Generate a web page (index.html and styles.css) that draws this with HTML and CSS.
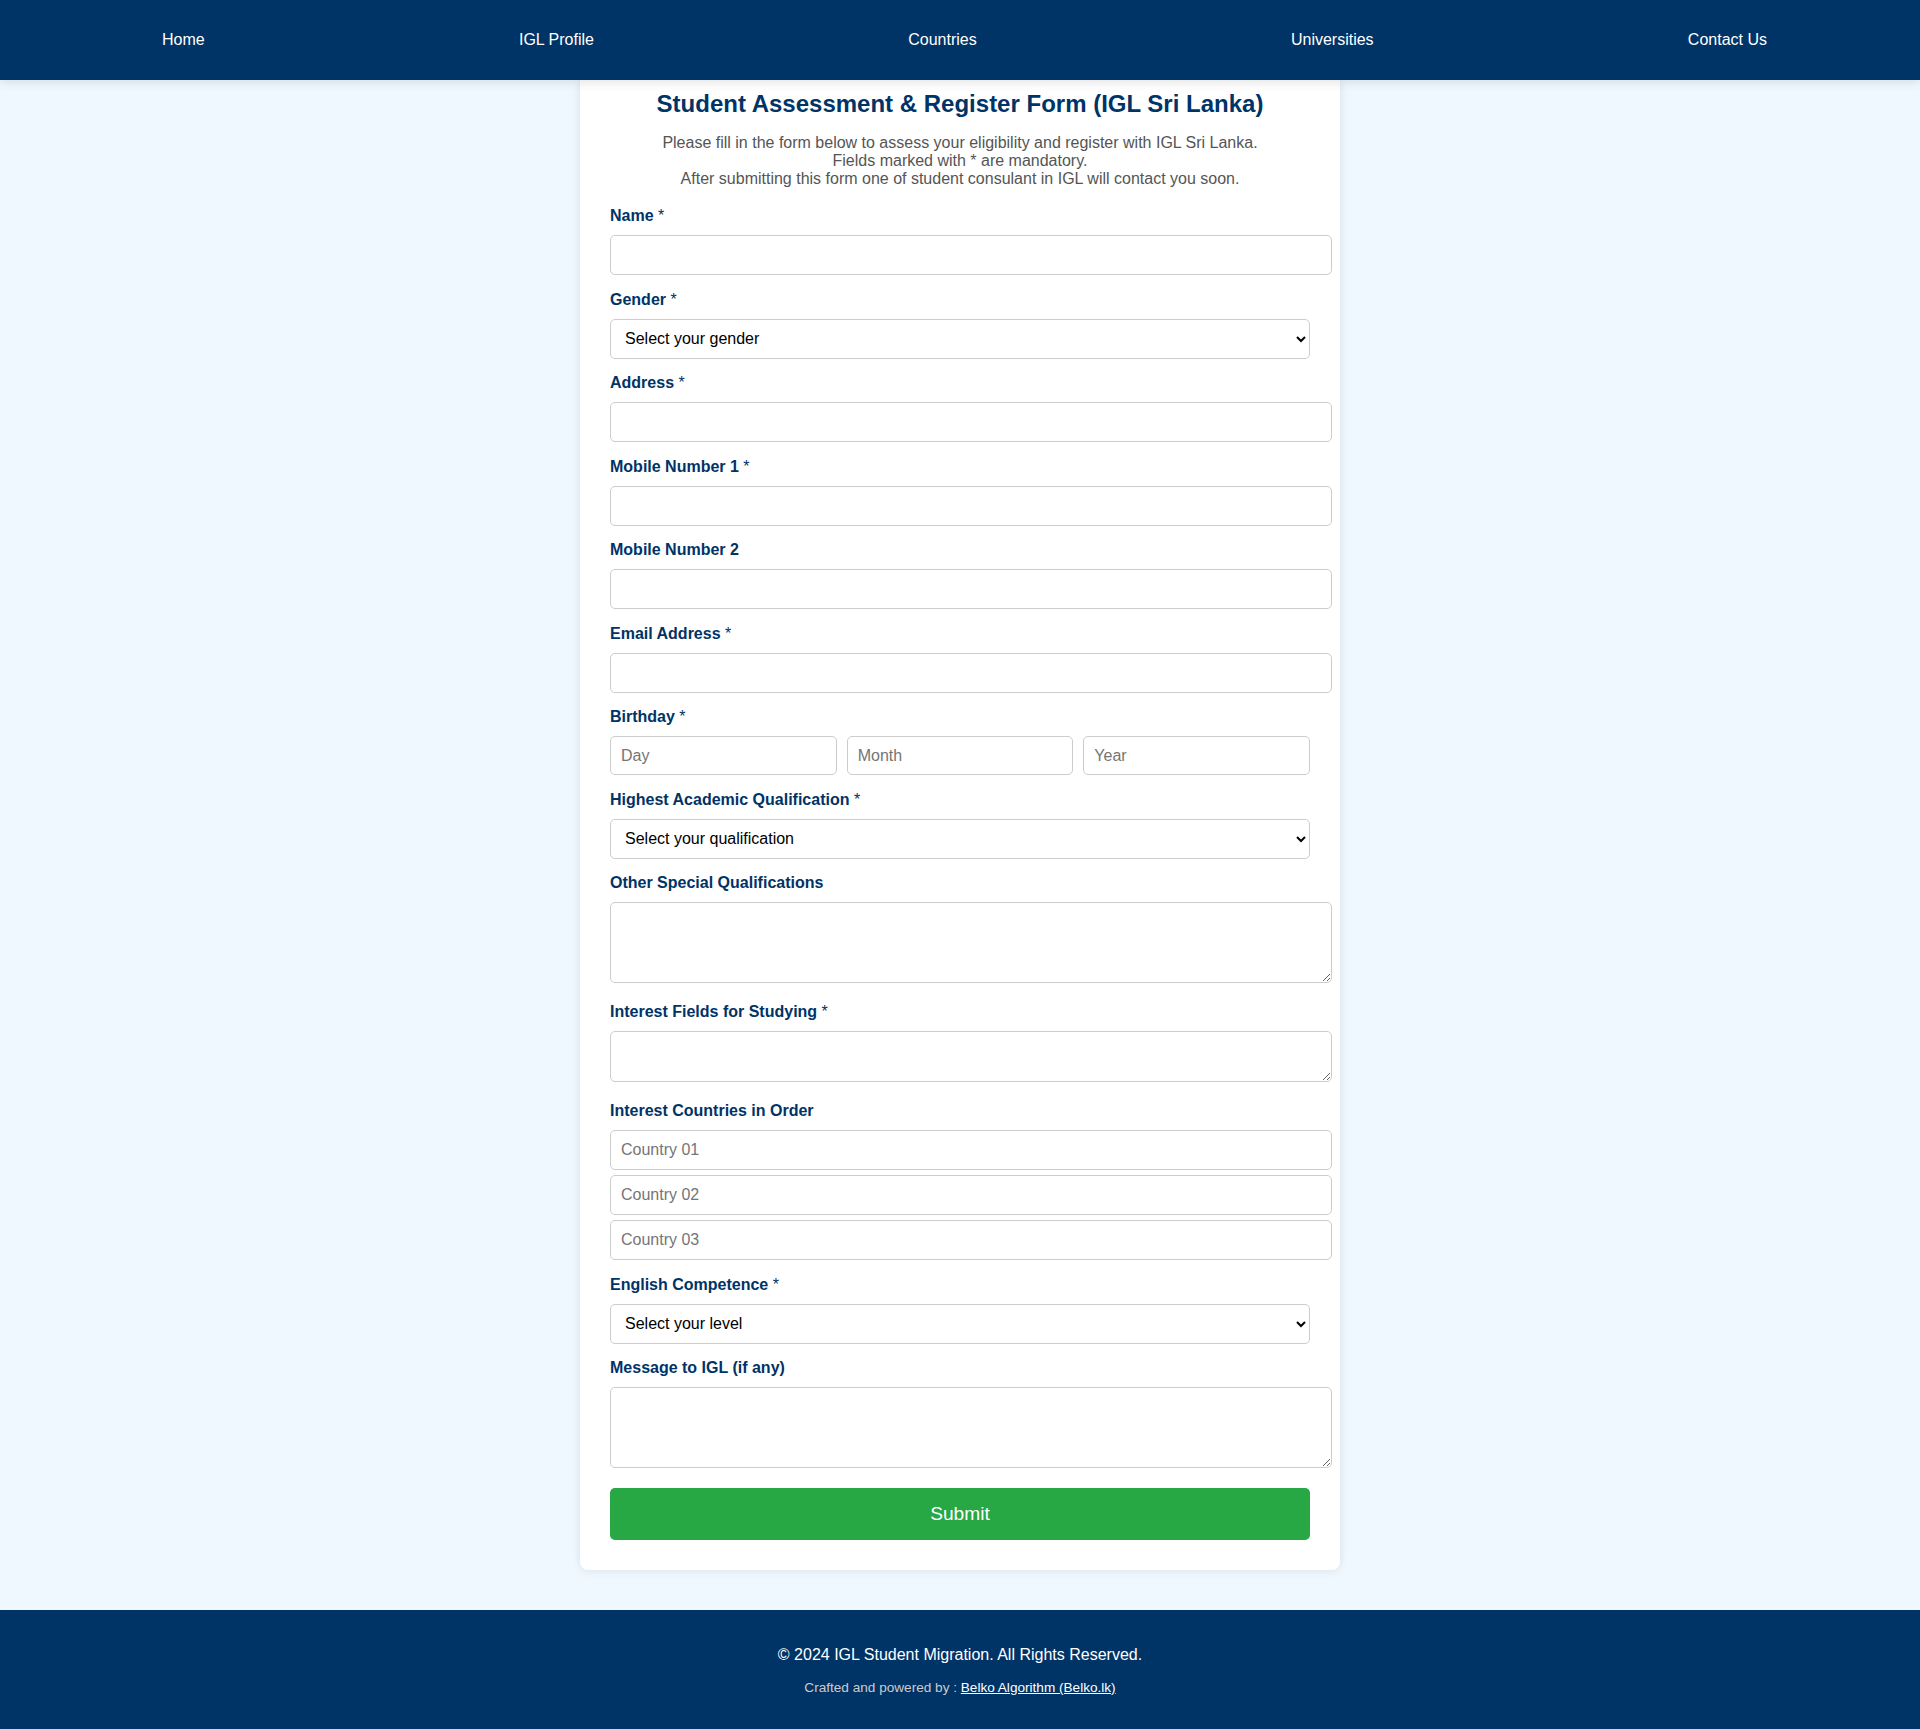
FILE: index.html
```html
<!DOCTYPE html>
<html lang="en">
<head>
<meta charset="utf-8">
<title>Student Assessment &amp; Register Form</title>
<link rel="stylesheet" href="styles.css">
</head>
<body>
<nav class="topnav">
  <a href="#">Home</a>
  <a href="#">IGL Profile</a>
  <a href="#">Countries</a>
  <a href="#">Universities</a>
  <a href="#">Contact Us</a>
</nav>

<main class="card">
  <h2 class="title">Student Assessment &amp; Register Form (IGL Sri Lanka)</h2>
  <p class="intro">Please fill in the form below to assess your eligibility and register with IGL Sri Lanka.<br>Fields marked with * are mandatory.<br>After submitting this form one of student consulant in IGL will contact you soon.</p>

  <form class="form">
    <div class="group">
      <label>Name <span class="req">*</span></label>
      <input type="text" class="field">
    </div>
    <div class="group">
      <label>Gender <span class="req">*</span></label>
      <select class="select">
        <option>Select your gender</option>
        <option>Male</option>
        <option>Female</option>
      </select>
    </div>
    <div class="group">
      <label>Address <span class="req">*</span></label>
      <input type="text" class="field">
    </div>
    <div class="group">
      <label>Mobile Number 1 <span class="req">*</span></label>
      <input type="text" class="field">
    </div>
    <div class="group">
      <label>Mobile Number 2</label>
      <input type="text" class="field">
    </div>
    <div class="group">
      <label>Email Address <span class="req">*</span></label>
      <input type="text" class="field">
    </div>
    <div class="group">
      <label>Birthday <span class="req">*</span></label>
      <div class="birth-row">
        <input type="text" class="birth" placeholder="Day">
        <input type="text" class="birth" placeholder="Month">
        <input type="text" class="birth" placeholder="Year">
      </div>
    </div>
    <div class="group">
      <label>Highest Academic Qualification <span class="req">*</span></label>
      <select class="select">
        <option>Select your qualification</option>
      </select>
    </div>
    <div class="group group-ta">
      <label>Other Special Qualifications</label>
      <textarea class="area area-lg"></textarea>
    </div>
    <div class="group group-ta">
      <label>Interest Fields for Studying <span class="req">*</span></label>
      <textarea class="area area-sm"></textarea>
    </div>
    <div class="group">
      <label>Interest Countries in Order</label>
      <div class="country-list">
        <input type="text" class="field" placeholder="Country 01">
        <input type="text" class="field" placeholder="Country 02">
        <input type="text" class="field" placeholder="Country 03">
      </div>
    </div>
    <div class="group">
      <label>English Competence <span class="req">*</span></label>
      <select class="select">
        <option>Select your level</option>
      </select>
    </div>
    <div class="group group-ta">
      <label>Message to IGL (if any)</label>
      <textarea class="area area-lg"></textarea>
    </div>
    <button type="button" class="submit">Submit</button>
  </form>
</main>

<footer class="footer">
  <p class="copy">&copy; 2024 IGL Student Migration. All Rights Reserved.</p>
  <p class="credit">Crafted and powered by : <a href="#">Belko Algorithm (Belko.lk)</a></p>
</footer>
</body>
</html>
```

FILE: styles.css
```css
* {
  font-family: "Liberation Sans", Arial, sans-serif;
}

body {
  margin: 0;
  background: #f0f8ff;
  color: #333;
}

.topnav {
  position: relative;
  z-index: 10;
  height: 80px;
  padding: 0 153px 0 162px;
  background: #003366;
  display: flex;
  align-items: center;
  justify-content: space-between;
  box-shadow: 0 2px 10px rgba(0, 0, 0, 0.12);
}

.topnav a {
  color: #fff;
  text-decoration: none;
  font-size: 16px;
}

.card {
  display: block;
  width: 700px;
  margin: 0 auto 40px;
  padding: 10px 30px 30px;
  background: #fff;
  border-radius: 0 0 8px 8px;
  box-shadow: 0 0 10px rgba(0, 0, 0, 0.1);
}

.title {
  margin: 0 0 16px;
  text-align: center;
  color: #003366;
  font-size: 24px;
  font-weight: bold;
}

.intro {
  margin: 0 0 19px;
  text-align: center;
  color: #555;
  font-size: 16px;
}

.form {
  margin: 0;
}

.group {
  margin-bottom: 15.5px;
}

.group-ta {
  margin-bottom: 20px;
}

.group label {
  display: block;
  margin-bottom: 10px;
  color: #003366;
  font-size: 16px;
  font-weight: bold;
}

.req {
  font-weight: normal;
}

.field,
.area {
  display: block;
  width: 100%;
  box-sizing: content-box;
  padding: 10px;
  border: 1px solid #ccc;
  border-radius: 5px;
  font-size: 16px;
  background: #fff;
  margin: 0;
}

.field {
  height: 18px;
}

.area {
  resize: vertical;
}

.area-lg {
  height: 59px;
}

.area-sm {
  height: 29px;
}

.select {
  display: block;
  width: 700px;
  height: 40px;
  padding: 0 10px;
  border: 1px solid #ccc;
  border-radius: 5px;
  background: #fff;
  font-size: 16px;
  color: #000;
}

.birth-row {
  display: flex;
  gap: 10px;
}

.birth {
  flex: 1;
  min-width: 0;
  box-sizing: border-box;
  height: 39px;
  padding: 10px;
  border: 1px solid #ccc;
  border-radius: 5px;
  font-size: 16px;
}

.country-list {
  display: flex;
  flex-direction: column;
  gap: 5px;
}

.submit {
  display: block;
  width: 700px;
  height: 52px;
  margin-top: 20px;
  border: none;
  border-radius: 5px;
  background: #28a745;
  color: #fff;
  font-size: 19.2px;
  cursor: pointer;
}

.footer {
  background: #003366;
  color: #fff;
  text-align: center;
  padding: 20px;
}

.copy {
  margin: 16px 0;
  font-size: 16px;
}

.credit {
  margin: 16px 0 14px;
  font-size: 13.6px;
  color: #ccc;
}

.credit a {
  color: #fff;
  text-decoration: underline;
}
```
